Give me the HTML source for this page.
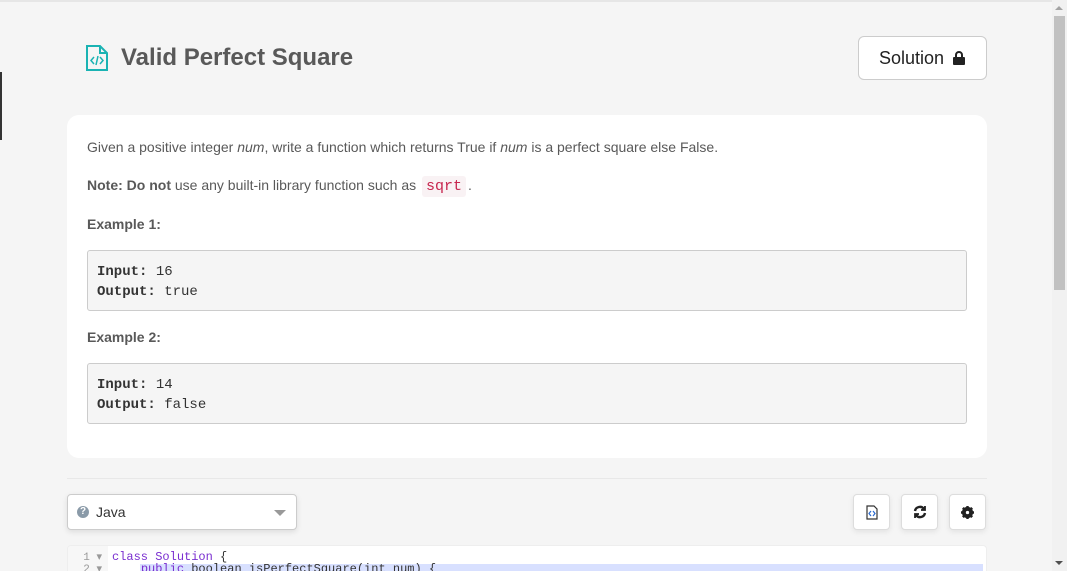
<!DOCTYPE html>
<html><head><meta charset="utf-8"><style>
*{box-sizing:border-box;margin:0;padding:0}
html,body{width:1067px;height:571px;overflow:hidden}
body{background:#f5f5f5;font-family:"Liberation Sans",sans-serif;color:#595959;position:relative}
.top{position:absolute;left:0;top:0;width:1052px;height:2px;background:#e6e6e6}
.lbar{position:absolute;left:0;top:72px;width:2px;height:68px;background:#333}
.sb{position:absolute;right:0;top:0;width:15px;height:571px;background:#f1f1f1}
.thumb{position:absolute;left:2px;top:16px;width:11px;height:274px;background:#c1c1c1}
.ua{position:absolute;left:3px;top:6px;width:0;height:0;border-left:4px solid transparent;border-right:4px solid transparent;border-bottom:4px solid #a3a3a3}
.da{position:absolute;left:3px;bottom:6px;width:0;height:0;border-left:4px solid transparent;border-right:4px solid transparent;border-top:4px solid #505050}
h1{position:absolute;left:121px;top:44px;font-size:24px;font-weight:bold;color:#595959}
.ficon{position:absolute;left:86px;top:45px}
.sol{position:absolute;left:858px;top:36px;width:129px;height:44px;background:#fff;border:1px solid #ccc;border-radius:6px;font-size:18px;color:#222;line-height:42px;padding-left:20px}
.card{position:absolute;left:67px;top:115px;width:920px;height:343px;background:#fff;border-radius:12px;padding:0 20px}
.card p{position:absolute;left:20px;font-size:14px;color:#595959}
code.s{font-family:"Liberation Mono",monospace;color:#c7254e;background:#f9f2f4;padding:2px 4px;border-radius:3px;font-size:15px;margin:0 2px}
.pre{position:absolute;left:20px;width:880px;height:61px;background:#f5f5f5;border:1px solid #ccc;border-radius:3px;font-family:"Liberation Mono",monospace;font-size:14px;color:#333;padding:11px 9px;line-height:20px}
.hr{position:absolute;left:67px;top:478px;width:920px;height:1px;background:#e8e8e8}
.sel{position:absolute;left:67px;top:494px;width:230px;height:36px;background:#fff;border:1px solid #ccc;border-radius:4px;box-shadow:0 2px 6px rgba(0,0,0,.1);font-size:14px;color:#333;line-height:34px;padding-left:28px}
.q{position:absolute;left:9px;top:11px;width:12px;height:12px;border-radius:50%;background:#8a9aa8;color:#fff;font-size:10px;line-height:12px;text-align:center;font-weight:bold}
.car{position:absolute;right:10px;top:15px;border-left:6px solid transparent;border-right:6px solid transparent;border-top:6px solid #999}
.btn{position:absolute;top:494px;width:37px;height:36px;background:#fff;border:1px solid #ddd;border-radius:4px;box-shadow:0 2px 6px rgba(0,0,0,.08);display:flex;align-items:center;justify-content:center}
.ed{position:absolute;left:67px;top:545px;width:920px;height:30px;background:#fff;border:1px solid #eee;border-radius:4px 4px 0 0;overflow:hidden}
.gut{position:absolute;left:0;top:0;width:40px;height:30px;background:#f7f7f7;font-family:"Liberation Mono",monospace;font-size:11px;color:#999;text-align:right;padding-right:6px;line-height:12px;padding-top:6px}
.code{position:absolute;left:44px;top:5px;font-family:"Liberation Mono",monospace;font-size:12px;line-height:12px;color:#333;white-space:pre}
.hl{position:absolute;left:72px;top:18px;width:843px;height:13px;background:#d8e0ff}
</style></head><body>
<div class="top"></div><div class="lbar"></div>
<div class="sb"><div class="ua"></div><div class="thumb"></div><div class="da"></div></div>
<svg class="ficon" width="22" height="26" viewBox="0 0 22 26" fill="none" stroke="#1ab3b3" stroke-width="2"><path d="M1 1h13l7 7v17H1z"/><path d="M14 1v7h7"/><path d="M8 12l-3 3.5 3 3.5M14 12l3 3.5-3 3.5M12 11l-2 9" stroke-width="1.5"/></svg>
<h1>Valid Perfect Square</h1>
<div class="sol">Solution <svg width="12" height="14" viewBox="0 0 12 14" style="vertical-align:-1px;margin-left:4px"><rect x="0" y="6" width="12" height="8" rx="1" fill="#222"/><path d="M3 6V4a3 3 0 0 1 6 0v2" stroke="#222" stroke-width="2" fill="none"/></svg></div>
<div class="card">
<p style="top:24px">Given a positive integer <i>num</i>, write a function which returns True if <i>num</i> is a perfect square else False.</p>
<p style="top:62px"><b>Note: Do not</b> use any built-in library function such as <code class="s">sqrt</code>.</p>
<p style="top:101px"><b>Example 1:</b></p>
<div class="pre" style="top:135px"><b>Input:</b> 16<br><b>Output:</b> true</div>
<p style="top:214px"><b>Example 2:</b></p>
<div class="pre" style="top:248px"><b>Input:</b> 14<br><b>Output:</b> false</div>
</div>
<div class="hr"></div>
<div class="sel"><div class="q">?</div>Java<div class="car"></div></div>
<div class="btn" style="left:853px"><svg width="12" height="15" viewBox="0 0 12 15" fill="none" stroke="#333" stroke-width="1.2"><path d="M1 1h7l3 3v10H1z"/><path d="M5 6l-2 2.5 2 2.5M7 6l2 2.5-2 2.5" stroke="#2a6ad0"/></svg></div>
<div class="btn" style="left:901px"><svg width="14" height="14" viewBox="0 0 14 14" fill="none" stroke="#222" stroke-width="2.4"><path d="M2 6a5 5 0 0 1 9-2M12 8a5 5 0 0 1-9 2"/><path d="M12 1v4H8M2 13V9h4" stroke-width="1.8" fill="#222"/></svg></div>
<div class="btn" style="left:949px"><svg width="13" height="13" viewBox="0 0 14 14"><circle cx="7" cy="7" r="4.5" fill="none" stroke="#222" stroke-width="3"/><g stroke="#222" stroke-width="2.6"><path d="M7 0v14M0 7h14M2 2l10 10M12 2L2 12"/></g><circle cx="7" cy="7" r="1.8" fill="#fff"/></svg></div>
<div class="ed"><div class="hl"></div><div class="gut">1 ▾<br>2 ▾</div><div class="code"><span style="color:#7a2fd0">class</span> <span style="color:#7a2fd0">Solution</span> {
    <span style="color:#7a2fd0">public</span> boolean isPerfectSquare(int num) {</div></div>
</body></html>
